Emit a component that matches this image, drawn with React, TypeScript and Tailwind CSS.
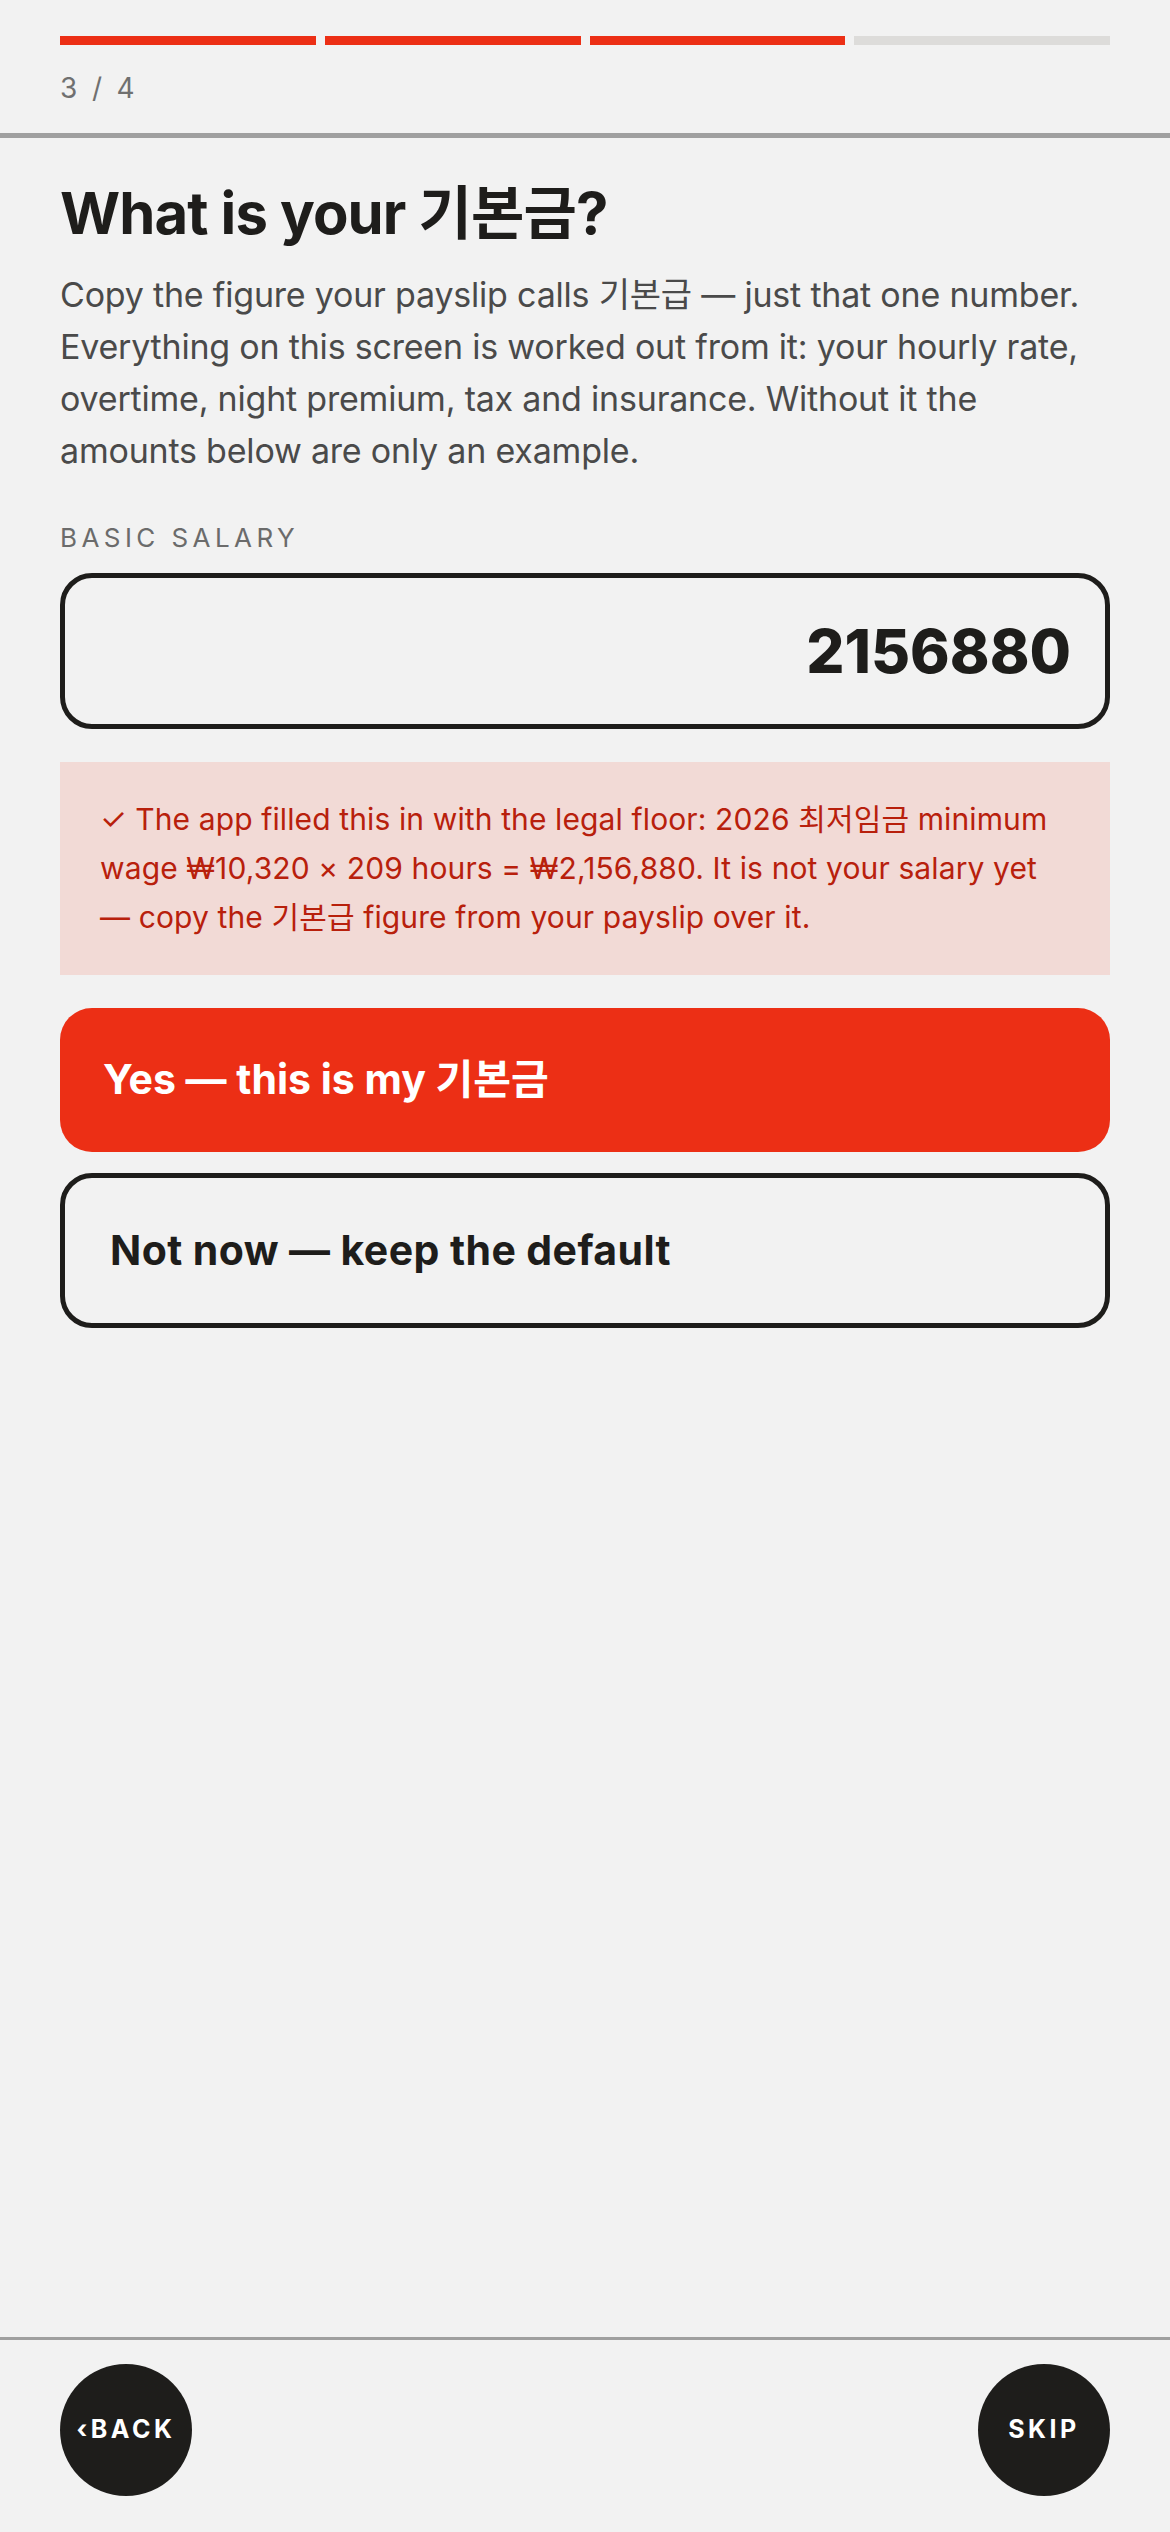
import React, { useState } from 'react';

const FONT = { fontFamily: 'Inter, "Noto Sans CJK KR", sans-serif' };

export default function App() {
    const [salary, setSalary] = useState('2156880');
    const step = 3;
    const total = 4;

    return (
        <div className="min-h-screen flex flex-col bg-[#f2f2f2] text-[#1e1d1b]" style={FONT}>
            {/* Progress header */}
            <header className="px-[60px] pt-[36px] pb-[31px] border-b-[5px] border-[#a0a0a0]">
                <div className="flex gap-[9px]">
                    {Array.from({ length: total }).map((_, i) => (
                        <div
                            key={i}
                            className={`h-[9px] flex-1 ${i < step ? 'bg-[#ec2f15]' : 'bg-[#dddcda]'}`}
                        />
                    ))}
                </div>
                <div className="mt-[29px] text-[28px] leading-none tracking-[0.12em] text-[#707070]">
                    {step} / {total}
                </div>
            </header>

            {/* Question */}
            <main className="flex-1 px-[60px]">
                <h1 className="mt-[43px] text-[58px] leading-[64px] font-bold tracking-[-0.015em]">
                    What is your 기본금?
                </h1>
                <p className="mt-[24px] text-[34px] leading-[52px] tracking-[-0.006em] text-[#4a4a4a]">
                    Copy the figure your payslip calls 기본급 — just that one number. Everything on this
                    screen is worked out from it: your hourly rate, overtime, night premium, tax and
                    insurance. Without it the amounts below are only an example.
                </p>

                <label className="mt-[48px] block text-[26px] leading-none tracking-[0.17em] text-[#6b6b6b]">
                    BASIC SALARY
                </label>
                <div className="mt-[22px] flex h-[156px] items-center justify-end rounded-[32px] border-[5px] border-[#1e1d1b] pr-[34px]">
                    <input
                        value={salary}
                        onChange={(e) => setSalary(e.target.value)}
                        inputMode="numeric"
                        className="w-full bg-transparent text-right text-[60px] font-extrabold tracking-[0] outline-none"
                    />
                </div>

                <p className="mt-[33px] bg-[#f2dad6] px-[40px] py-[33px] text-[30px] leading-[49px] tracking-[0.004em] text-[#b8200c]">
                    ✓ The app filled this in with the legal floor: 2026 최저임금 minimum wage ₩10,320 × 209
                    hours = ₩2,156,880. It is not your salary yet — copy the 기본급 figure from your payslip
                    over it.
                </p>

                <button className="mt-[33px] flex h-[144px] w-full items-center rounded-[32px] bg-[#ec2f15] pl-[43px] text-[41px] font-bold tracking-[0em] text-white">
                    Yes — this is my 기본금
                </button>
                <button className="mt-[21px] flex h-[155px] w-full items-center rounded-[32px] border-[5px] border-[#1e1d1b] pl-[45px] text-[41px] font-bold tracking-[0.01em]">
                    Not now — keep the default
                </button>
            </main>

            {/* Footer nav */}
            <footer className="flex items-center justify-between border-t-[3px] border-[#a0a0a0] px-[60px] pt-[24px] pb-[36px]">
                <button className="flex h-[132px] w-[132px] items-center justify-center rounded-full bg-[#1e1d1b] text-[25px] font-bold tracking-[0.14em] text-white">
                    ‹BACK
                </button>
                <button className="flex h-[132px] w-[132px] items-center justify-center rounded-full bg-[#1e1d1b] text-[25px] font-bold tracking-[0.14em] text-white">
                    SKIP
                </button>
            </footer>
        </div>
    );
}
